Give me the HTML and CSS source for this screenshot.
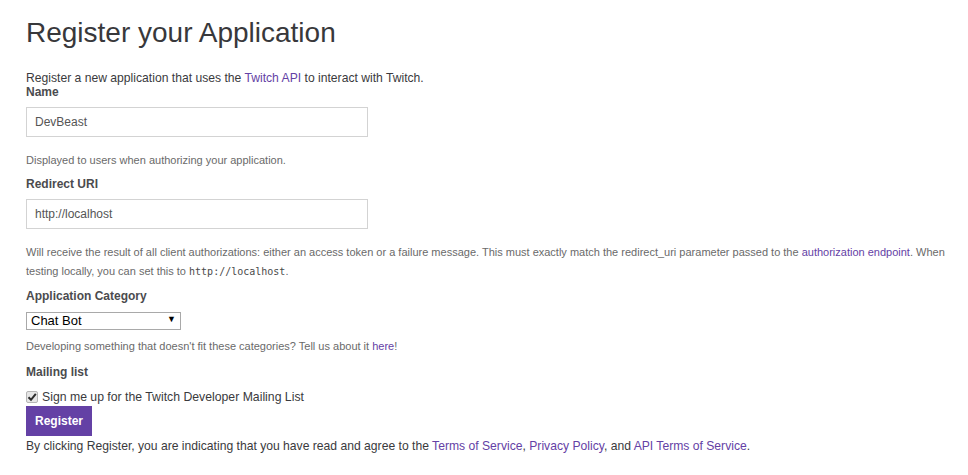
FILE: index.html
```html
<!DOCTYPE html>
<html>
<head>
<meta charset="utf-8">
<link rel="stylesheet" href="styles.css">
</head>
<body>
<div class="page">
  <h1 class="title">Register your Application</h1>
  <p class="intro">Register a new application that uses the <a href="#">Twitch API</a> to interact with Twitch.</p>
  <form class="form">
    <label class="label label-name">Name</label>
    <input class="text-input" type="text" value="DevBeast">
    <p class="help help-name">Displayed to users when authorizing your application.</p>
    <label class="label label-uri">Redirect URI</label>
    <input class="text-input" type="text" value="http://localhost">
    <p class="help help-uri">Will receive the result of all client authorizations: either an access token or a failure message. This must exactly match the redirect_uri parameter passed to the <a href="#">authorization endpoint</a>. When testing locally, you can set this to <code>http://localhost</code>.</p>
    <label class="label label-cat">Application Category</label>
    <div class="select-wrap">
      <select class="select"><option>Chat Bot</option></select>
      <span class="select-arrow">▼</span>
    </div>
    <p class="help help-cat">Developing something that doesn't fit these categories? Tell us about it <a href="#">here</a>!</p>
    <label class="label label-mail">Mailing list</label>
    <label class="check">
      <span class="check-box"><svg width="10" height="10" viewBox="0 0 10 10"><path d="M1.5 5.2 L4 7.8 L8.8 1.8" fill="none" stroke="#2b2b2b" stroke-width="2"/></svg></span>
      Sign me up for the Twitch Developer Mailing List
    </label>
    <button class="btn" type="button">Register</button>
    <p class="terms">By clicking Register, you are indicating that you have read and agree to the <a href="#">Terms of Service</a>, <a href="#">Privacy Policy</a>, and <a href="#">API Terms of Service</a>.</p>
  </form>
</div>
</body>
</html>
```
FILE: styles.css
```css
* { box-sizing: border-box; }
body {
  margin: 0;
  background: #fff;
  font-family: "Liberation Sans", Arial, sans-serif;
  color: #3a3a3d;
}
.page {
  padding: 15px 18px 0 26px;
}
a { color: #6441a5; text-decoration: none; }
.title {
  margin: 0;
  font-size: 28px;
  font-weight: 400;
  line-height: 36px;
  color: #38383b;
}
.intro {
  margin: 20px 0 0 0;
  font-size: 12.15px;
  line-height: 14px;
}
.form { display: flex; flex-direction: column; align-items: flex-start; }
.label {
  display: block;
  font-size: 12px;
  font-weight: 700;
  line-height: 14px;
  color: #4b4b4e;
  margin-top: 10px;
}
.label-name { margin-top: 0; }
.label-uri { margin-top: 7px; }
.label-cat { margin-top: 8px; }
.label-mail { margin-top: 9px; }
.text-input {
  margin-top: 8px;
  width: 342px;
  height: 30px;
  border: 1px solid #d3d3d3;
  padding: 0 8px;
  font-family: "Liberation Sans", Arial, sans-serif;
  font-size: 12px;
  color: #555;
  background: #fff;
}
.help {
  margin: 14px 0 0 0;
  font-size: 11px;
  line-height: 19px;
  color: #6a6a6a;
}
.help code {
  font-family: "DejaVu Sans Mono", monospace;
  font-size: 10px;
  color: #4a4a4a;
}
.select-wrap {
  position: relative;
  margin-top: 8px;
  width: 155px;
  height: 18px;
}
.select {
  appearance: none;
  -webkit-appearance: none;
  width: 155px;
  height: 18px;
  padding: 0 0 0 4px;
  font-family: "Liberation Sans", Arial, sans-serif;
  font-size: 13px;
  line-height: 16px;
  color: #000;
  border: 1px solid #a9a9a9;
  background: #fff;
  border-radius: 0;
}
.select-arrow {
  position: absolute;
  right: 5px;
  top: 3px;
  font-size: 9px;
  line-height: 10px;
  color: #000;
  pointer-events: none;
}
.help-cat { margin-top: 8px; }
.check {
  margin-top: 11px;
  display: flex;
  align-items: center;
  font-size: 12.25px;
  color: #3a3a3d;
}
.check-box {
  width: 12px;
  height: 12px;
  margin-right: 4px;
  border: 1px solid #b5b5b5;
  border-radius: 2px;
  background: #e6e6e6;
  display: flex;
  align-items: center;
  justify-content: center;
}
.check-box svg { display: block; }
.btn {
  margin-top: 2px;
  height: 30px;
  padding: 0 9px;
  border: 0;
  background: #6441a5;
  color: #fff;
  font-family: "Liberation Sans", Arial, sans-serif;
  font-size: 12px;
  font-weight: 700;
}
.terms {
  margin: 1px 0 0 0;
  font-size: 12.15px;
  line-height: 18px;
  color: #3a3a3d;
}
```
